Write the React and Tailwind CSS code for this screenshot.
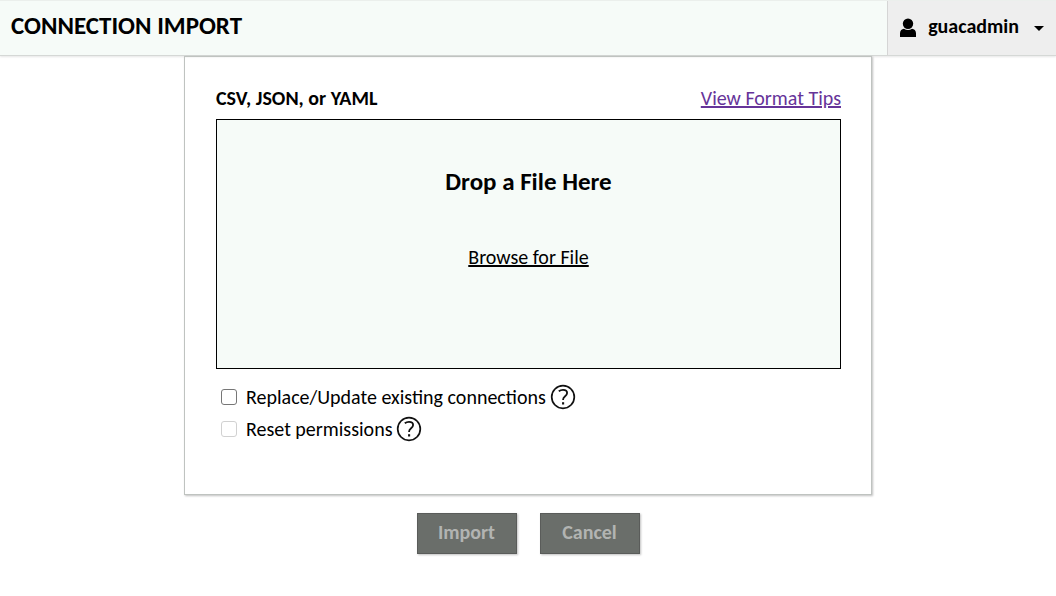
import { useState } from 'react';

function UserIcon() {
  return (
    <svg viewBox="0 0 18 20" className="h-5 w-[18px] shrink-0" aria-hidden="true">
      <circle cx="9" cy="5.7" r="5.2" fill="#000" />
      <path d="M1 19V15.2C1 12.4 2.8 10.9 5 10.7C7.3 12.3 10.7 12.3 13 10.7C15.2 10.9 17 12.4 17 15.2V19Z" fill="#000" />
    </svg>
  );
}

function HelpButton({ label }) {
  return (
    <button type="button" aria-label={label} className="ml-1 size-[26px] shrink-0">
      <svg viewBox="0 0 26 26" className="size-[26px]" fill="none" stroke="#111" aria-hidden="true">
        <circle cx="13" cy="13" r="11.3" strokeWidth="1.7" />
        <path d="M8.8 7.3C10 6.3 11.5 5.8 13 5.8C15.5 5.8 17.1 7.1 17.1 9.1C17.1 12.1 13.1 12.4 13.1 15.4V16" strokeWidth="1.8" />
        <path d="M13.1 18.2V20.5" strokeWidth="2.1" />
      </svg>
    </button>
  );
}

function Option({ id, label, help, checked, disabled, onChange }) {
  return (
    <div className="flex items-center">
      <input
        id={id}
        type="checkbox"
        checked={checked}
        disabled={disabled}
        onChange={onChange}
        className="size-4 shrink-0 appearance-none rounded-[3px] border border-[#767676] bg-white checked:bg-[#0075ff] disabled:border-[#d1d1d1]"
      />
      <label htmlFor={id} className="ml-[9px]">{label}</label>
      <HelpButton label={help} />
    </div>
  );
}

function ActionButton({ children }) {
  return (
    <button
      type="button"
      disabled
      className="h-[41px] w-[100px] border border-[#5a5c5a] bg-[#6a6e6a] pb-1 text-[20px] font-bold text-[#b2b4b2] shadow-[1px_1px_2px_rgba(0,0,0,0.25)]"
    >
      {children}
    </button>
  );
}

export default function App() {
  const [replace, setReplace] = useState(false);
  const [reset, setReset] = useState(false);

  return (
    <div className="min-h-screen bg-white font-[Carlito,Lato,sans-serif] text-[20px] leading-6 text-black">
      <header className="flex h-14 items-stretch justify-between border-t border-b border-t-[#ebefec] border-b-[#d5d8d6] bg-[#f6fbf8] shadow-[0_1px_2px_rgba(0,0,0,0.1)]">
        <h1 className="flex items-center px-[11px] pb-1 text-[25px] font-bold">CONNECTION IMPORT</h1>
        <button type="button" className="flex items-center border-l border-[#d5d5d5] bg-[#eeeeee] pr-3 pl-[11px] font-bold">
          <UserIcon />
          <span className="ml-[11px] pb-1">guacadmin</span>
          <svg viewBox="0 0 10 5" className="ml-[15px] h-[5px] w-[10px]" aria-hidden="true">
            <path d="M0 0H10L5 5Z" fill="#000" />
          </svg>
        </button>
      </header>

      <main className="mx-auto w-full max-w-[688px]">
        <section className="border border-[#bfc3c0] pt-[29px] pr-[30px] pb-[52px] pl-[31px] shadow-[1px_1px_2px_rgba(0,0,0,0.25)]">
          <div className="mb-[9px] flex items-center justify-between">
            <h2 className="font-bold">CSV, JSON, or YAML</h2>
            <a href="#tips" className="text-[#663399] underline">View Format Tips</a>
          </div>

          <div className="flex h-[250px] flex-col items-center border border-black bg-[#f6fbf8] pt-12">
            <h3 className="text-[25px] leading-7 font-bold">Drop a File Here</h3>
            <button type="button" className="mt-[49px] underline">Browse for File</button>
          </div>

          <div className="mt-[15px] flex flex-col gap-[6px] pl-[5px]">
            <Option
              id="replace"
              label="Replace/Update existing connections"
              help="Help for replacing connections"
              checked={replace}
              onChange={(e) => setReplace(e.target.checked)}
            />
            <Option
              id="reset"
              label="Reset permissions"
              help="Help for resetting permissions"
              checked={reset}
              disabled={!replace}
              onChange={(e) => setReset(e.target.checked)}
            />
          </div>
        </section>

        <div className="mt-[18px] flex justify-center gap-[23px]">
          <ActionButton>Import</ActionButton>
          <ActionButton>Cancel</ActionButton>
        </div>
      </main>
    </div>
  );
}
